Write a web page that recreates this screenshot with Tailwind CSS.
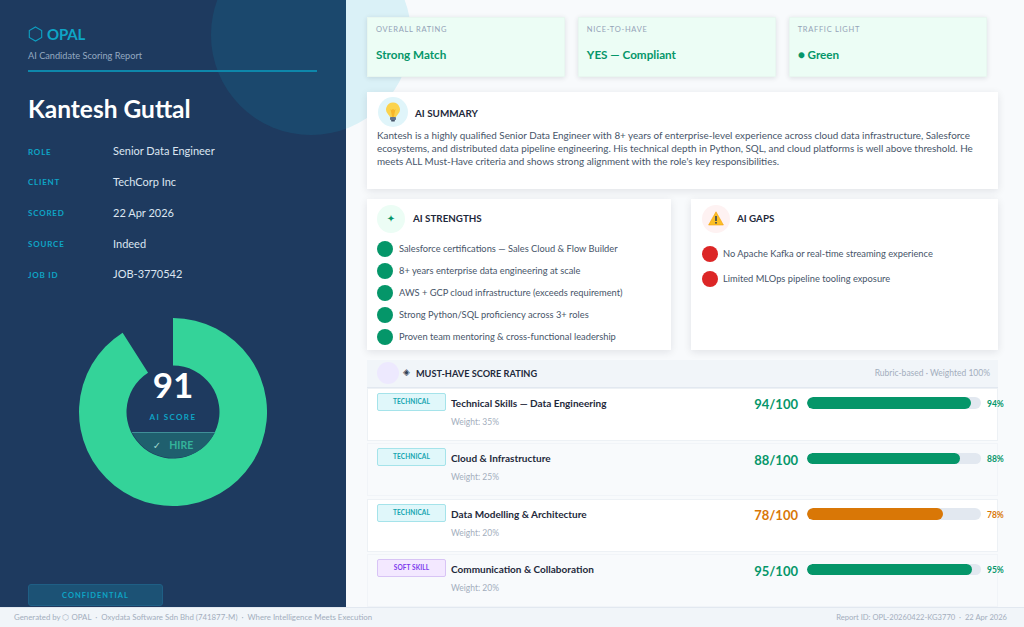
<!DOCTYPE html>
<html lang="en">
<head>
    <meta charset="UTF-8">
    <title>OPAL - AI Candidate Scoring Report</title>
    <script src="https://cdn.jsdelivr.net/npm/@tailwindcss/browser@4"></script>
</head>
<body class="font-['Lato','Liberation_Sans',sans-serif] bg-[#f8fafc] text-[#1e293b]">
<div class="relative w-[1024px] h-[627px] overflow-hidden flex flex-col">
    <div class="flex flex-1 min-h-0">
        <!-- sidebar -->
        <aside class="w-[346px] shrink-0 bg-[#1e3a5f] flex flex-col pl-[28px] pt-[25px] pb-[1px]">
            <div class="flex items-center gap-[4px] h-[18px] relative z-10">
                <svg width="15" height="16" viewBox="0 0 15 16" fill="none" stroke="#0e9fc0" stroke-width="1.1"><polygon points="7.5,1 13.7,4.5 13.7,11.5 7.5,15 1.3,11.5 1.3,4.5"/></svg>
                <span class="text-[15px] font-bold leading-none tracking-[-0.2px] text-[#0ea5c6] mt-[1px]">OPAL</span>
            </div>
            <p class="text-[9.2px] leading-none mt-[8px] text-[#94a9c1] relative z-10">AI Candidate Scoring Report</p>
            <div class="w-[289px] h-[2px] mt-[10px] bg-[#0e87ab] relative z-10"></div>
            <h1 class="text-[24.5px] font-bold leading-none text-white mt-[24.5px] relative z-10">Kantesh Guttal</h1>
            <dl class="mt-[22.5px] flex flex-col gap-[14.75px] relative z-10">
                <div class="flex items-center h-[16px]"><dt class="w-[85px] text-[8px] font-bold tracking-[0.8px] text-[#0ea5c6]">ROLE</dt><dd class="text-[11px] text-[#dbe5f0]">Senior Data Engineer</dd></div>
                <div class="flex items-center h-[16px]"><dt class="w-[85px] text-[8px] font-bold tracking-[0.8px] text-[#0ea5c6]">CLIENT</dt><dd class="text-[11px] text-[#dbe5f0]">TechCorp Inc</dd></div>
                <div class="flex items-center h-[16px]"><dt class="w-[85px] text-[8px] font-bold tracking-[0.8px] text-[#0ea5c6]">SCORED</dt><dd class="text-[11px] text-[#dbe5f0]">22 Apr 2026</dd></div>
                <div class="flex items-center h-[16px]"><dt class="w-[85px] text-[8px] font-bold tracking-[0.8px] text-[#0ea5c6]">SOURCE</dt><dd class="text-[11px] text-[#dbe5f0]">Indeed</dd></div>
                <div class="flex items-center h-[16px]"><dt class="w-[85px] text-[8px] font-bold tracking-[0.8px] text-[#0ea5c6]">JOB ID</dt><dd class="text-[11px] text-[#dbe5f0]">JOB-3770542</dd></div>
            </dl>
            <!-- score donut -->
            <div class="relative w-[188px] h-[188px] ml-[51px] mt-[35px]">
                <svg width="188" height="188" viewBox="0 0 188 188" class="block">
                    <path fill="#34d399" d="M94 0 A94 94 0 1 1 43.6 14.66 L69.06 54.75 A46.5 46.5 0 1 0 94 47.5 Z"/>
                </svg>
                <div class="absolute left-[47.5px] top-[47.5px] w-[93px] h-[93px] flex flex-col items-center">
                    <span class="text-[35px] font-bold leading-none text-white mt-[2px]">91</span>
                    <span class="text-[8px] font-bold tracking-[1.4px] leading-none text-[#0ea5c6] mt-[10.5px]">AI SCORE</span>
                    <div class="mt-auto w-full h-[26px] relative">
                        <!-- the strip follows the bottom of the inner circle -->
                        <div class="absolute left-0 bottom-0 w-[93px] h-[93px] rounded-full overflow-hidden flex flex-col justify-end">
                            <div class="h-[26px] border-t border-[#3f8f98] bg-[#1f5f6e]"></div>
                        </div>
                        <div class="relative flex justify-center gap-[8px] pt-[6px] text-[10.5px] leading-[15px] font-bold text-[#34b39a]">
                            <span class="font-['DejaVu_Sans',sans-serif] font-normal text-[#9fd8cc] text-[10px]">✓</span><span>HIRE</span>
                        </div>
                    </div>
                </div>
            </div>
            <div class="mt-auto w-[135px] h-[22px] pt-[1px] rounded-[3px] bg-[#1c5275] border border-[#1f5f85] flex items-center justify-center text-[7.5px] font-bold tracking-[1px] text-[#0ea5c6]">CONFIDENTIAL</div>
        </aside>

        <!-- main -->
        <main class="flex-1 min-w-0 pl-[21px] pr-[26px] pt-[17px] relative z-10 flex flex-col">
            <div class="grid grid-cols-3 gap-[12.5px] w-[620px]">
                <div class="h-[60px] bg-[#ecfdf5] border border-[#e8f7f0] shadow-[0_1px_5px_rgba(15,23,42,0.12)] pl-[8px] pt-[7px]">
                    <p class="text-[7.5px] tracking-[0.7px] leading-[10px] text-[#94a3b8]">OVERALL RATING</p>
                    <p class="text-[11.7px] font-bold leading-none text-[#059669] mt-[14px]">Strong Match</p>
                </div>
                <div class="h-[60px] bg-[#ecfdf5] border border-[#e8f7f0] shadow-[0_1px_5px_rgba(15,23,42,0.12)] pl-[8px] pt-[7px]">
                    <p class="text-[7.5px] tracking-[0.7px] leading-[10px] text-[#94a3b8]">NICE-TO-HAVE</p>
                    <p class="text-[11.7px] font-bold leading-none text-[#059669] mt-[14px]">YES — Compliant</p>
                </div>
                <div class="h-[60px] bg-[#ecfdf5] border border-[#e8f7f0] shadow-[0_1px_5px_rgba(15,23,42,0.12)] pl-[8px] pt-[7px]">
                    <p class="text-[7.5px] tracking-[0.7px] leading-[10px] text-[#94a3b8]">TRAFFIC LIGHT</p>
                    <p class="text-[11.7px] font-bold leading-none text-[#059669] mt-[14px]">● Green</p>
                </div>
            </div>

            <section class="mt-[15px] h-[97px] bg-white shadow-[0_2px_8px_rgba(15,23,42,0.1)] pl-[11px] pr-[16px] pt-[5px]">
                <div class="flex items-center gap-[7px]">
                    <div class="w-[30px] h-[30px] rounded-full bg-[#e0f5fa] flex items-center justify-center">
                        <svg width="16" height="20" viewBox="0 0 16 20"><path fill="#fbd34d" d="M8 0.5a7 7 0 0 1 4.4 12.4c-.8.7-1.2 1.3-1.3 2.1H4.9c-.1-.8-.5-1.4-1.3-2.1A7 7 0 0 1 8 .5z"/><path fill="#f59e0b" d="M5.5 7l1 1 1.5-1 1.5 1 1-1-1.7 8H7.2z" opacity=".55"/><rect x="5" y="15" width="6" height="3" rx=".8" fill="#64748b"/><rect x="6" y="18" width="4" height="1.5" rx=".7" fill="#475569"/></svg>
                    </div>
                    <h2 class="text-[9.9px] font-bold text-[#1e293b] mt-[3px]">AI SUMMARY</h2>
                </div>
                <p class="text-[9.9px] leading-[13px] text-[#475569] mt-[2px] ml-[-1px]">Kantesh is a highly qualified Senior Data Engineer with 8+ years of enterprise-level experience across cloud data infrastructure, Salesforce ecosystems, and distributed data pipeline engineering. His technical depth in Python, SQL, and cloud platforms is well above threshold. He meets ALL Must-Have criteria and shows strong alignment with the role's key responsibilities.</p>
            </section>

            <div class="mt-[10px] flex justify-between">
                <section class="w-[304px] h-[151px] bg-white shadow-[0_2px_8px_rgba(15,23,42,0.1)] pl-[10px] pt-[6px]">
                    <div class="flex items-center gap-[8px]">
                        <div class="w-[28px] h-[28px] rounded-full bg-[#ecfdf5] flex items-center justify-center text-[10px] font-['DejaVu_Sans',sans-serif] text-[#059669]">✦</div>
                        <h2 class="text-[9.8px] font-bold text-[#1e293b]">AI STRENGTHS</h2>
                    </div>
                    <ul class="mt-[8px] flex flex-col gap-[6px] text-[9.3px] text-[#475569]">
                        <li class="flex items-center gap-[6px] h-[16px]"><span class="w-[16px] h-[16px] rounded-full bg-[#059669]"></span>Salesforce certifications — Sales Cloud &amp; Flow Builder</li>
                        <li class="flex items-center gap-[6px] h-[16px]"><span class="w-[16px] h-[16px] rounded-full bg-[#059669]"></span>8+ years enterprise data engineering at scale</li>
                        <li class="flex items-center gap-[6px] h-[16px]"><span class="w-[16px] h-[16px] rounded-full bg-[#059669]"></span>AWS + GCP cloud infrastructure (exceeds requirement)</li>
                        <li class="flex items-center gap-[6px] h-[16px]"><span class="w-[16px] h-[16px] rounded-full bg-[#059669]"></span>Strong Python/SQL proficiency across 3+ roles</li>
                        <li class="flex items-center gap-[6px] h-[16px]"><span class="w-[16px] h-[16px] rounded-full bg-[#059669]"></span>Proven team mentoring &amp; cross-functional leadership</li>
                    </ul>
                </section>
                <section class="w-[307px] h-[151px] bg-white shadow-[0_2px_8px_rgba(15,23,42,0.1)] pl-[11px] pt-[6px]">
                    <div class="flex items-center gap-[7px]">
                        <div class="w-[28px] h-[28px] rounded-full bg-[#fef2f2] flex items-center justify-center">
                            <svg width="16" height="15" viewBox="0 0 16 15"><path fill="#fbbf24" stroke="#f59e0b" stroke-width=".6" stroke-linejoin="round" d="M8 .8 15.4 14H.6z"/><rect x="7.2" y="5" width="1.6" height="5" fill="#334155"/><rect x="7.2" y="11" width="1.6" height="1.6" fill="#334155"/></svg>
                        </div>
                        <h2 class="text-[9.8px] font-bold text-[#1e293b]">AI GAPS</h2>
                    </div>
                    <ul class="mt-[13px] flex flex-col gap-[9px] text-[9.3px] text-[#475569]">
                        <li class="flex items-center gap-[5px] h-[16px]"><span class="w-[16px] h-[16px] rounded-full bg-[#dc2626]"></span>No Apache Kafka or real-time streaming experience</li>
                        <li class="flex items-center gap-[5px] h-[16px]"><span class="w-[16px] h-[16px] rounded-full bg-[#dc2626]"></span>Limited MLOps pipeline tooling exposure</li>
                    </ul>
                </section>
            </div>

            <section class="mt-[10px] flex flex-col">
                <div class="h-[28px] bg-[#f1f5f9] border-b border-[#e2e8f0] flex items-center pl-[10px] pr-[8px]">
                    <div class="w-[22px] h-[22px] rounded-full bg-[#ede9fe]"></div>
                    <span class="ml-[4px] text-[9px] font-['DejaVu_Sans',sans-serif] text-[#334155]">◈</span>
                    <h2 class="ml-[6px] mt-[1px] text-[9.2px] font-bold text-[#1e293b]">MUST-HAVE SCORE RATING</h2>
                    <span class="ml-auto mt-[1px] text-[8.5px] text-[#a3aebd]">Rubric-based · Weighted 100%</span>
                </div>

                <div class="h-[53px] bg-white border border-[#edf1f5] pl-[9px] pt-[4px] flex">
                    <span class="w-[69px] h-[18px] rounded-[2px] bg-[#e0f7fa] border border-[#a5e3ea] flex items-center justify-center text-[6.5px] font-bold tracking-[0.1px] text-[#14a5b0]">TECHNICAL</span>
                    <div class="ml-[5px]">
                        <p class="text-[10px] font-bold leading-[15px] mt-[3px] text-[#1e293b]">Technical Skills — Data Engineering</p>
                        <p class="text-[8.5px] leading-none mt-[7px] text-[#a3aebd]">Weight: 35%</p>
                    </div>
                    <span class="ml-auto text-[13px] font-bold leading-none mt-[5.5px] text-[#059669]">94/100</span>
                    <div class="ml-[9px] mt-[4.5px] w-[174px] h-[11.5px] rounded-full bg-[#e2e8f0] overflow-hidden shrink-0"><div class="h-full rounded-full bg-[#059669]" style="width:94%"></div></div>
                    <span class="w-[17px] mr-[-7px] ml-[6px] mt-[7px] text-[8.5px] font-bold leading-none text-[#059669] shrink-0">94%</span>
                </div>
                <div class="h-[53px] mt-[2.5px] bg-[#f8fafc] border border-[#f1f4f8] pl-[9px] pt-[4px] flex">
                    <span class="w-[69px] h-[18px] rounded-[2px] bg-[#e0f7fa] border border-[#a5e3ea] flex items-center justify-center text-[6.5px] font-bold tracking-[0.1px] text-[#14a5b0]">TECHNICAL</span>
                    <div class="ml-[5px]">
                        <p class="text-[10px] font-bold leading-[15px] mt-[3px] text-[#1e293b]">Cloud &amp; Infrastructure</p>
                        <p class="text-[8.5px] leading-none mt-[7px] text-[#a3aebd]">Weight: 25%</p>
                    </div>
                    <span class="ml-auto text-[13px] font-bold leading-none mt-[5.5px] text-[#059669]">88/100</span>
                    <div class="ml-[9px] mt-[4.5px] w-[174px] h-[11.5px] rounded-full bg-[#e2e8f0] overflow-hidden shrink-0"><div class="h-full rounded-full bg-[#059669]" style="width:88%"></div></div>
                    <span class="w-[17px] mr-[-7px] ml-[6px] mt-[7px] text-[8.5px] font-bold leading-none text-[#059669] shrink-0">88%</span>
                </div>
                <div class="h-[53px] mt-[2.5px] bg-white border border-[#edf1f5] pl-[9px] pt-[4px] flex">
                    <span class="w-[69px] h-[18px] rounded-[2px] bg-[#e0f7fa] border border-[#a5e3ea] flex items-center justify-center text-[6.5px] font-bold tracking-[0.1px] text-[#14a5b0]">TECHNICAL</span>
                    <div class="ml-[5px]">
                        <p class="text-[10px] font-bold leading-[15px] mt-[3px] text-[#1e293b]">Data Modelling &amp; Architecture</p>
                        <p class="text-[8.5px] leading-none mt-[7px] text-[#a3aebd]">Weight: 20%</p>
                    </div>
                    <span class="ml-auto text-[13px] font-bold leading-none mt-[5.5px] text-[#d97706]">78/100</span>
                    <div class="ml-[9px] mt-[4.5px] w-[174px] h-[11.5px] rounded-full bg-[#e2e8f0] overflow-hidden shrink-0"><div class="h-full rounded-full bg-[#d97706]" style="width:78%"></div></div>
                    <span class="w-[17px] mr-[-7px] ml-[6px] mt-[7px] text-[8.5px] font-bold leading-none text-[#d97706] shrink-0">78%</span>
                </div>
                <div class="h-[53px] mt-[2.5px] bg-[#f8fafc] border border-[#f1f4f8] pl-[9px] pt-[4px] flex">
                    <span class="w-[69px] h-[18px] rounded-[2px] bg-[#f3e8ff] border border-[#d8c4f5] flex items-center justify-center text-[6.5px] font-bold tracking-[0.1px] text-[#7c3aed]">SOFT SKILL</span>
                    <div class="ml-[5px]">
                        <p class="text-[10px] font-bold leading-[15px] mt-[3px] text-[#1e293b]">Communication &amp; Collaboration</p>
                        <p class="text-[8.5px] leading-none mt-[7px] text-[#a3aebd]">Weight: 20%</p>
                    </div>
                    <span class="ml-auto text-[13px] font-bold leading-none mt-[5.5px] text-[#059669]">95/100</span>
                    <div class="ml-[9px] mt-[4.5px] w-[174px] h-[11.5px] rounded-full bg-[#e2e8f0] overflow-hidden shrink-0"><div class="h-full rounded-full bg-[#059669]" style="width:95%"></div></div>
                    <span class="w-[17px] mr-[-7px] ml-[6px] mt-[7px] text-[8.5px] font-bold leading-none text-[#059669] shrink-0">95%</span>
                </div>
            </section>
        </main>
    </div>

    <footer class="relative z-20 h-[20px] shrink-0 bg-[#f1f5f9] border-t border-[#e2e8f0] flex items-center justify-between pl-[14px] pr-[17px] text-[#a3aebd]">
        <span class="text-[7.85px]">Generated by ⬡ OPAL &nbsp;·&nbsp; Oxydata Software Sdn Bhd (741877-M) &nbsp;·&nbsp; Where Intelligence Meets Execution</span>
        <span class="text-[7.6px]">Report ID: OPL-20260422-KG3770 &nbsp;·&nbsp; 22 Apr 2026</span>
    </footer>

    <!-- decorative circle behind both panels -->
    <div class="absolute left-[211px] top-[-65px] w-[200px] h-[200px] rounded-full bg-[#06b6d4]/12"></div>
</div>
</body>
</html>
